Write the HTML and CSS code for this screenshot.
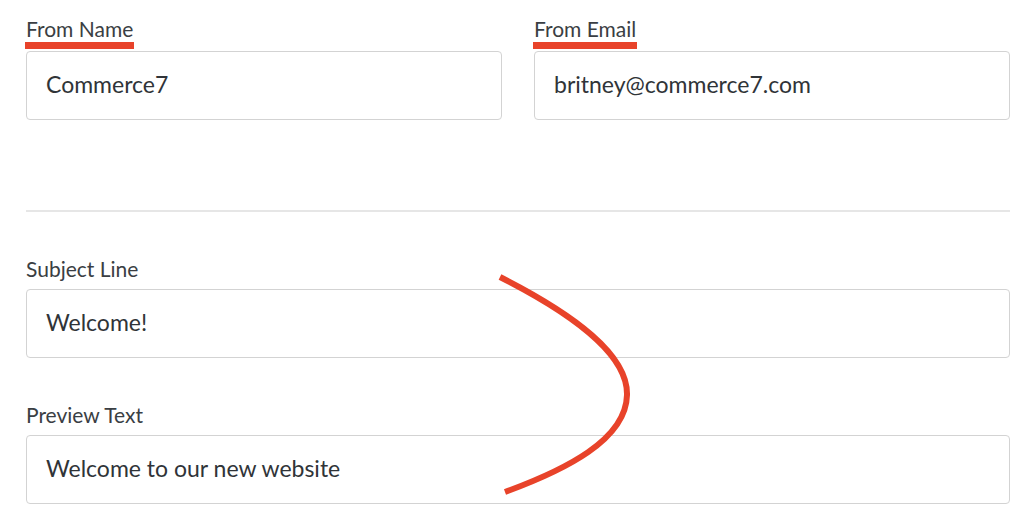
FILE: index.html
```html
<!DOCTYPE html>
<html>
<head>
<meta charset="utf-8">
<link rel="stylesheet" href="styles.css">
</head>
<body>
<div class="page">
  <div class="row">
    <div class="field">
      <div class="label"><span class="mark">From Name</span></div>
      <div class="box">Commerce7</div>
    </div>
    <div class="field">
      <div class="label"><span class="mark">From Email</span></div>
      <div class="box">britney@commerce7.com</div>
    </div>
  </div>
  <div class="divider"></div>
  <div class="field wide">
    <div class="label">Subject Line</div>
    <div class="box">Welcome!</div>
  </div>
  <div class="field wide second">
    <div class="label">Preview Text</div>
    <div class="box">Welcome to our new website</div>
  </div>
  <svg class="scribble" width="1032" height="523" viewBox="0 0 1032 523">
    <path d="M500,277 C575,315 628,355 627,395 C626,440 565,470 505,492" fill="none" stroke="#e8432a" stroke-width="6"/>
  </svg>
</div>
</body>
</html>
```

FILE: styles.css
```css
html, body {
  margin: 0;
  padding: 0;
  background: #ffffff;
}
.page {
  position: relative;
  width: 1032px;
  height: 523px;
  padding: 17px 0 0 26px;
  box-sizing: border-box;
  font-family: Lato, "Open Sans", sans-serif;
  color: #33373b;
  overflow: hidden;
}
.row {
  display: flex;
  gap: 32px;
  width: 984px;
}
.row .field {
  flex: 1;
}
.label {
  font-size: 21px;
  line-height: 24px;
  height: 24px;
  margin-bottom: 10px;
  color: #3a3e43;
}
.wide .label {
  margin-bottom: 8px;
}
.mark {
  position: relative;
  display: inline-block;
}
.mark::after {
  content: "";
  position: absolute;
  left: -1px;
  right: -1px;
  top: 25px;
  height: 7px;
  background: #e8432a;
}
.box {
  height: 69px;
  box-sizing: border-box;
  border: 1px solid #d3d3d3;
  border-radius: 4px;
  padding: 0 0 3px 19px;
  display: flex;
  align-items: center;
  font-size: 23px;
  color: #303438;
}
.wide {
  width: 984px;
}
.divider {
  width: 984px;
  height: 2px;
  background: #e6e6e6;
  margin-top: 90px;
  margin-bottom: 45px;
}
.second {
  margin-top: 45px;
}
.scribble {
  position: absolute;
  left: 0;
  top: 0;
}
```
